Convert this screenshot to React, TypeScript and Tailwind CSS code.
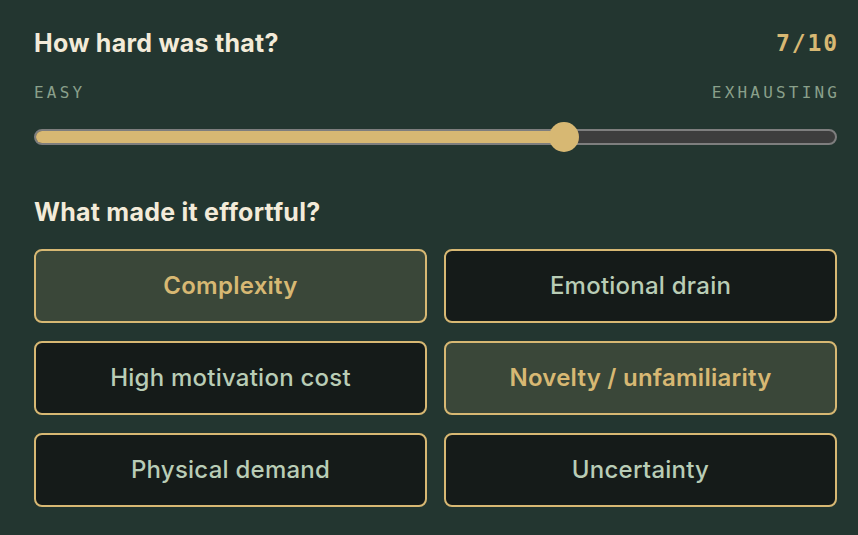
import React, { useState } from "react";

const REASONS = [
  "Complexity",
  "Emotional drain",
  "High motivation cost",
  "Novelty / unfamiliarity",
  "Physical demand",
  "Uncertainty",
];

const sans = { fontFamily: '"Inter", "Noto Sans", sans-serif' };
const mono = { fontFamily: '"DejaVu Sans Mono", "Liberation Mono", monospace' };

const EffortSlider = ({ value, min, max }: { value: number; min: number; max: number }) => {
  const p = (value - min) / (max - min);
  const center = `calc(15px + ${p} * (100% - 30px))`;
  return (
    <div className="relative h-[30px] flex items-center">
      <div className="w-full h-[16px] rounded-full border-2 border-[#7e7e7e] bg-[#3d3d3d] overflow-hidden">
        <div className="h-full bg-[#d7b873]" style={{ width: center }}></div>
      </div>
      <div
        className="absolute top-0 w-[30px] h-[30px] rounded-full bg-[#d7b873] -translate-x-1/2"
        style={{ left: center }}
      ></div>
    </div>
  );
};

export default function App() {
  const [selected, setSelected] = useState<string[]>(["Complexity", "Novelty / unfamiliarity"]);

  const toggle = (r: string) =>
    setSelected((s) => (s.includes(r) ? s.filter((x) => x !== r) : [...s, r]));

  return (
    <div className="min-h-screen bg-[#233630] pl-[34px] pr-[21px] pt-[28px]" style={sans}>
      <div className="flex items-center justify-between">
        <h2 className="text-[25px] leading-[30px] font-bold tracking-[0.01em] text-[#f3ebd9]">How hard was that?</h2>
        <span className="text-[23px] leading-[30px] font-bold text-[#d7b873] tracking-[0.08em] -mr-[0.08em]" style={mono}>
          7/10
        </span>
      </div>

      <div
        className="mt-[26px] flex justify-between text-[16px] leading-[18px] tracking-[0.2em] text-[#8aa08b]"
        style={mono}
      >
        <span>EASY</span>
        <span className="-mr-[0.2em]">EXHAUSTING</span>
      </div>

      <div className="mt-[20px]">
        <EffortSlider value={7} min={1} max={10} />
      </div>

      <h3 className="mt-[45px] text-[25px] leading-[30px] font-bold tracking-[0.01em] text-[#f3ebd9]">
        What made it effortful?
      </h3>

      <div className="mt-[22px] grid grid-cols-2 gap-x-[17px] gap-y-[18px]">
        {REASONS.map((r) => {
          const on = selected.includes(r);
          return (
            <button
              key={r}
              onClick={() => toggle(r)}
              className={
                on
                  ? "h-[74px] rounded-[8px] border-2 border-[#d7b873] bg-[#3a4739] text-[#d7b873] text-[24px] tracking-[0.01em] font-semibold"
                  : "h-[74px] rounded-[8px] border-2 border-[#d7b873] bg-[#151b19] text-[#b9cdb6] text-[24px] tracking-[0.01em] font-medium"
              }
            >
              {r}
            </button>
          );
        })}
      </div>
    </div>
  );
}
